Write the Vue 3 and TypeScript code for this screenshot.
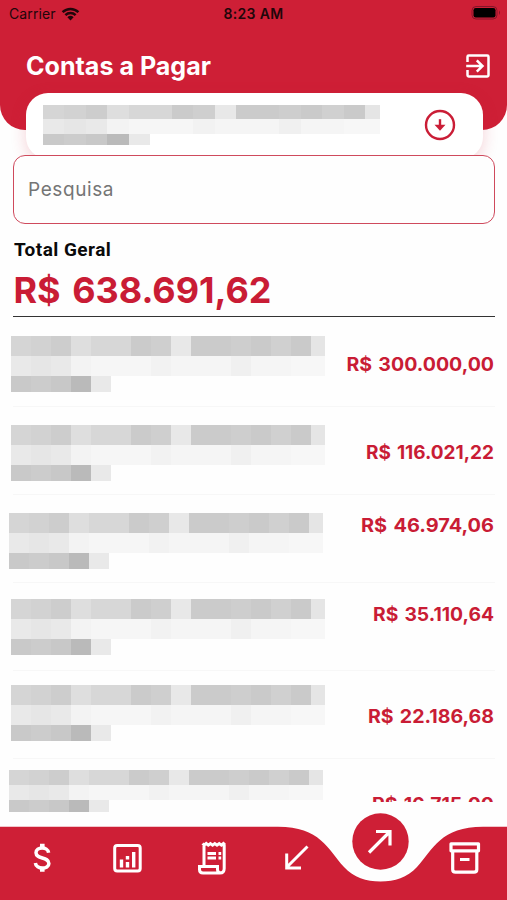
<script setup lang="ts">
type Cell = [x: number, width: number, band: number, tone: string]

interface Account {
  amount: string
  width: number
  baseline: number
  maskX: number
  maskY: number
  maskHeight: number
}

const cells: Cell[] = [
  [0, 20, 0, '#d5d5d5'], [20, 20, 0, '#d2d2d2'], [40, 20, 0, '#cdcdcd'],
  [60, 20, 0, '#dedede'], [80, 40, 0, '#d7d7d7'], [120, 20, 0, '#cbcbcb'],
  [140, 20, 0, '#cfcfcf'], [160, 20, 0, '#e8e8e8'], [180, 40, 0, '#cbcbcb'],
  [220, 20, 0, '#cecece'], [240, 20, 0, '#cacaca'], [260, 20, 0, '#d0d0d0'],
  [280, 20, 0, '#cacaca'], [300, 14, 0, '#e5e5e5'],
  [0, 20, 1, '#e9e9e9'], [20, 20, 1, '#e6e6e6'], [40, 20, 1, '#e9e9e9'],
  [60, 20, 1, '#f3f3f3'], [80, 60, 1, '#f6f6f6'], [140, 20, 1, '#f2f2f2'],
  [160, 60, 1, '#f5f5f5'], [220, 20, 1, '#f0f0f0'], [240, 40, 1, '#f5f5f5'],
  [280, 34, 1, '#f7f7f7'],
  [0, 20, 2, '#c9c9c9'], [20, 20, 2, '#cccccc'], [40, 20, 2, '#c8c8c8'],
  [60, 20, 2, '#bababa'], [80, 20, 2, '#e9e9e9'],
]
const bandTop = [0, 20, 40]
const bandHeight = [20, 20, 16]

const accounts: Account[] = [
  { amount: 'R$ 300.000,00', width: 147.5, baseline: 52, maskX: 10.6, maskY: 17, maskHeight: 56 },
  { amount: 'R$ 116.021,22', width: 128, baseline: 52, maskX: 11, maskY: 18, maskHeight: 56 },
  { amount: 'R$ 46.974,06', width: 133, baseline: 37, maskX: 9, maskY: 18, maskHeight: 56 },
  { amount: 'R$ 35.110,64', width: 121, baseline: 37.5, maskX: 10.6, maskY: 16, maskHeight: 56 },
  { amount: 'R$ 22.186,68', width: 126, baseline: 52, maskX: 11.4, maskY: 14, maskHeight: 56 },
  { amount: 'R$ 16.715,00', width: 122, baseline: 51.5, maskX: 9.4, maskY: 11, maskHeight: 42 },
]
</script>

<template>
  <main class="screen">
    <header class="top">
      <div class="status">
        <div class="carrier">
          <span>Carrier</span>
          <svg width="19" height="14" viewBox="0 0 19 14">
            <path d="M1.6 5.2a11.3 11.3 0 0 1 15.8 0M4.4 8.2a7.2 7.2 0 0 1 10.2 0" fill="none" stroke="#21060a" stroke-width="2.5" />
            <path d="M9.5 13.4 6.4 10.3a4.5 4.5 0 0 1 6.2 0Z" fill="#21060a" />
          </svg>
        </div>
        <strong class="time">8:23 AM</strong>
        <svg class="battery" width="31" height="15" viewBox="0 0 31 15">
          <rect x="1" y="0.5" width="25" height="12.5" rx="4" fill="none" stroke="#85152a" />
          <rect x="2.5" y="2" width="22" height="9.5" rx="2.2" fill="#000" />
          <path d="M28 4.5q2 2.2 0 4.5Z" fill="#85152a" />
        </svg>
      </div>
      <div class="heading">
        <svg class="title" width="200" height="34" role="heading">
          <text x="0" y="26" textLength="185" lengthAdjust="spacingAndGlyphs">Contas a Pagar</text>
        </svg>
        <svg width="24" height="24" viewBox="0 0 24 24" fill="none" stroke="#fff" stroke-width="2.5">
          <path d="M1.500 8V2.700q0-1.200 1.200-1.200h18.600q1.200 0 1.200 1.200v18.600q0 1.200-1.200 1.200H2.700q-1.200 0-1.200-1.200V16M.2 12H16M10.800 6.300l5.700 5.700-5.700 5.700" />
        </svg>
      </div>
    </header>

    <section class="card">
      <svg class="mask" width="337" height="40.5" viewBox="0 0 314 56" preserveAspectRatio="none" shape-rendering="crispEdges">
        <rect v-for="(c, i) in cells" :key="i" :x="c[0]" :y="bandTop[c[2]]" :width="c[1]" :height="bandHeight[c[2]]" :fill="c[3]" />
      </svg>
      <svg class="down" width="32" height="32" viewBox="0 0 32 32">
        <circle cx="16" cy="16" r="14" fill="none" stroke="#ca1d36" stroke-width="2.4" />
        <path d="M16 10.200v8" stroke="#ca1d36" stroke-width="2.400" />
        <path d="M10.500 15.800H21.500L16 21.800Z" fill="#ca1d36" />
      </svg>
    </section>

    <label class="search"><input type="text" placeholder="Pesquisa" /></label>

    <section class="total">
      <h2>Total Geral</h2>
      <svg class="sum" width="270" height="46">
        <text x="-0.5" y="35" textLength="258" lengthAdjust="spacingAndGlyphs">R$ 638.691,62</text>
      </svg>
    </section>

    <ul class="list">
      <li v-for="a in accounts" :key="a.amount" class="row">
        <svg
          class="mask"
          :style="{ marginLeft: a.maskX + 'px', marginTop: a.maskY + 'px' }"
          width="314"
          :height="a.maskHeight"
          viewBox="0 0 314 56"
          preserveAspectRatio="none"
          shape-rendering="crispEdges"
        >
          <rect v-for="(c, i) in cells" :key="i" :x="c[0]" :y="bandTop[c[2]]" :width="c[1]" :height="bandHeight[c[2]]" :fill="c[3]" />
        </svg>
        <svg class="amount" width="160" height="86">
          <text :x="160 - a.width" :y="a.baseline" :textLength="a.width" lengthAdjust="spacingAndGlyphs">{{ a.amount }}</text>
        </svg>
      </li>
    </ul>

    <nav class="nav">
      <svg width="507" height="98" viewBox="0 0 507 98" fill="none" stroke="#fff" stroke-width="3">
        <path d="M0 24.700H278C320 24.700 328 47 344 65C354 75.500 366 79.500 380.500 79.500C395 79.500 407 75.500 417 65C433 47 441 24.700 483 24.700H507V98H0Z" fill="#ce1f36" stroke="none" />
        <circle cx="380.500" cy="39.500" r="28.200" fill="#ce1f36" stroke="none" />
        <path d="M42.300 41.800V46M42.300 65.500V69.800" stroke-width="4.600" />
        <path d="M48.600 50.800C47.800 44.200 36 44.500 36 50.800C36 57.500 48.900 54.500 48.900 61.500C48.900 67.600 36 67.800 35.400 61" stroke-width="3.500" />
        <rect x="114.700" y="43.500" width="25.500" height="25.500" rx="2.500" />
        <path d="M121.500 57.500V65.500M127.500 60V65.500M127.500 54V57.500M133.700 50V65.500" stroke-width="3.400" />
        <path d="M204 63V44M202.600 41.500l1.600 1.600 2-1.600 2.100 1.600 2.100-1.600 2.200 1.600 2.200-1.600 2.200 1.600 2.200-1.600 2.200 1.600 2-1.600 1.600 1.600M224.200 43V66.500Q224.200 71 220 71H203Q199.500 71 199.500 67.500V64.500H217.500V67.500Q217.500 71 221 71" stroke-width="3" />
        <path d="M207.500 51.500H216M218.500 51.500H221.200M207.500 56H216M218.500 56H221.200" stroke-width="2.900" />
        <path d="M307.500 44.500 287 65M286.700 51.500V66H301" stroke-width="3" />
        <path d="M369 50.500 390 29.500M376 29.500H390V43.500" stroke-width="3.200" />
        <path d="M451 41.800H478.500V48.800H451ZM452.700 49V67.500Q452.700 70.200 455.500 70.200H474Q476.800 70.200 476.800 67.500V49" stroke-width="3.200" stroke-linejoin="round" />
        <path d="M460 57.500H469.500" stroke-width="3" />
      </svg>
    </nav>
  </main>
</template>

<style>
body {
  background: #fefefe;
}
</style>

<style scoped>
.screen {
  display: flex;
  flex-direction: column;
  width: 507px;
  height: 900px;
  overflow: hidden;
  background: #fefefe;
  font-family: Inter, 'Liberation Sans', sans-serif;
}

svg {
  display: block;
  flex: none;
}

.top {
  flex: none;
  box-sizing: border-box;
  height: 130px;
  padding-top: 5px;
  border-radius: 0 0 25px 25px;
  background: #ce1f36;
}

.status {
  display: grid;
  grid-template-columns: 1fr auto 1fr;
  align-items: center;
  height: 16px;
  padding: 0 5px 0 9px;
  color: #21060a;
  font-size: 14px;
}

.carrier {
  display: flex;
  align-items: center;
  gap: 5px;
}

.carrier span {
  letter-spacing: 0.1px;
}

.time {
  margin-right: 4px;
  font-size: 14px;
  font-weight: 600;
  letter-spacing: 0.35px;
}

.battery {
  justify-self: end;
}

.heading {
  display: flex;
  justify-content: space-between;
  align-items: center;
  height: 34px;
  margin-top: 28px;
  padding: 0 17.5px 0 26px;
}

.heading > svg:last-child {
  margin-top: -1px;
}

.title text {
  fill: #fff;
  font-size: 25px;
  font-weight: 700;
}

.card {
  display: flex;
  flex: none;
  justify-content: space-between;
  align-items: flex-start;
  box-sizing: border-box;
  width: 457px;
  height: 66px;
  margin: -37.5px 0 0 25.5px;
  padding: 12px 27px 0 17px;
  border-radius: 22px;
  background: #fff;
  box-shadow: 0 4px 16px rgba(206, 31, 54, 0.2);
}

.down {
  margin-top: 4.5px;
}

.search {
  display: flex;
  flex: none;
  align-items: center;
  box-sizing: border-box;
  z-index: 1;
  width: 482px;
  height: 69px;
  margin: -4px 0 0 13px;
  padding: 0 14px;
  border: 1.3px solid #cf4a5d;
  border-radius: 12px;
  background: #fefefe;
}

.search input {
  width: 100%;
  padding: 0;
  border: 0;
  outline: 0;
  background: transparent;
  font: 19px Inter, sans-serif;
  letter-spacing: 0.6px;
}

.search input::placeholder {
  color: #757575;
  opacity: 1;
}

.total {
  flex: none;
  box-sizing: border-box;
  width: 482px;
  height: 93.5px;
  margin-left: 13px;
  padding: 14px 0 0 1px;
  border-bottom: 1.5px solid #333;
}

.total h2 {
  margin: 0;
  color: #0a0a0a;
  font: 700 19px/24px Roboto, sans-serif;
  letter-spacing: 0.45px;
}

.sum {
  margin-top: 6px;
}

.sum text {
  fill: #c91c35;
  font-size: 36px;
  font-weight: 700;
  word-spacing: 3px;
}

.list {
  flex: none;
  height: 496px;
  margin: 2px 0 0;
  padding: 0;
  list-style: none;
}

.row {
  display: flex;
  justify-content: space-between;
  align-items: flex-start;
  box-sizing: border-box;
  height: 88px;
  padding-right: 13px;
  background: linear-gradient(#f7f7f7, #f7f7f7) 13px 100% / 482px 1.5px no-repeat;
}

.row:last-child {
  height: 56px;
  background: none;
}

.row:last-child .amount {
  height: 43px;
}

.amount {
  overflow: hidden;
}

.amount text {
  fill: #c91c35;
  font-size: 18.8px;
  font-weight: 700;
  word-spacing: 1.5px;
}

.nav {
  flex: none;
  z-index: 1;
  margin-top: -13px;
}
</style>
